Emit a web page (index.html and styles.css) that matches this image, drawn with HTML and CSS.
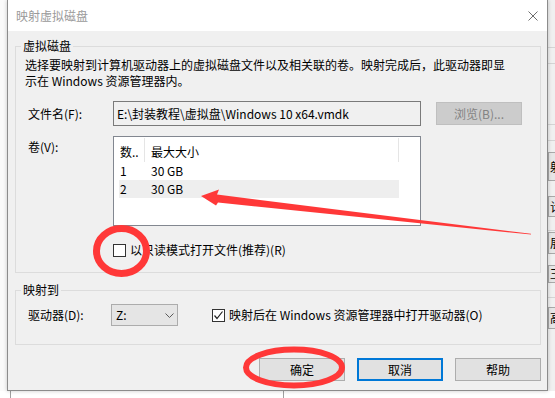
FILE: index.html
```html
<!DOCTYPE html>
<html lang="zh-CN">
<head>
<meta charset="utf-8">
<title>映射虚拟磁盘</title>
<link rel="stylesheet" href="styles.css">
</head>
<body>
<div class="desktop">
  <div class="top-row">
    <div class="gutter"></div>
    <div class="window">
      <div class="titlebar">
        <span class="title">映射虚拟磁盘</span>
        <svg class="close" width="10" height="10" viewBox="0 0 10 10"><path d="M0.5 0.5 L9.5 9.5 M9.5 0.5 L0.5 9.5" stroke="#6e6e6e" stroke-width="1" fill="none"/></svg>
      </div>
      <div class="body">
        <fieldset class="group g1">
          <legend>虚拟磁盘</legend>
          <div class="content">
            <p class="desc">选择要映射到计算机驱动器上的虚拟磁盘文件以及相关联的卷。映射完成后，此驱动器即显<br>示在 Windows 资源管理器内。</p>
            <div class="row file-row">
              <span class="label">文件名(F):</span>
              <div class="field">E:\封装教程\虚拟盘\Windows 10 x64.vmdk</div>
              <button class="btn disabled">浏览(B)...</button>
            </div>
            <div class="row vol-row">
              <span class="label vol-label">卷(V):</span>
              <div class="listbox">
                <div class="lv-head">
                  <div class="lv-c1">数..</div>
                  <div class="lv-c2">最大大小</div>
                </div>
                <div class="lv-row"><span class="c1">1</span><span class="c2">30 GB</span></div>
                <div class="lv-row selected"><span class="c1">2</span><span class="c2">30 GB</span></div>
              </div>
            </div>
            <div class="check-row ro">
              <span class="checkbox"></span>
              <span>以只读模式打开文件(推荐)(R)</span>
            </div>
          </div>
        </fieldset>
        <fieldset class="group g2">
          <legend>映射到</legend>
          <div class="content">
            <div class="row drive-row">
              <span class="label drive-label">驱动器(D):</span>
              <div class="combo"><span>Z:</span><svg width="9" height="5" viewBox="0 0 9 5"><polyline points="0.5,0.5 4.5,4.5 8.5,0.5" fill="none" stroke="#5a5a5a" stroke-width="1"/></svg></div>
              <span class="checkbox checked"><svg width="11" height="11" viewBox="0 0 11 11"><polyline points="1.5,5.5 4,8.5 9.5,1.5" fill="none" stroke="#222" stroke-width="1.2"/></svg></span>
              <span class="open-label">映射后在 Windows 资源管理器中打开驱动器(O)</span>
            </div>
          </div>
        </fieldset>
        <div class="buttons">
          <button class="btn">确定</button>
          <button class="btn focus">取消</button>
          <button class="btn">帮助</button>
        </div>
      </div>
    </div>
    <div class="rs">
      <div class="ln l1"></div>
      <div class="ln l2"></div>
      <div class="ln l3"></div>
      <div class="ln l4"></div>
      <div class="bx b1">射</div>
      <div class="bx b2">计</div>
      <div class="ln l5"></div>
      <div class="bx b3">展</div>
      <div class="bx b4">玉</div>
      <div class="ln l6"></div>
      <div class="bx b5">高</div>
    </div>
  </div>
  <div class="bottom">
    <div class="vl vl1"></div>
    <div class="vl vl2"></div>
  </div>
</div>
<svg class="annot" width="555" height="398" viewBox="0 0 555 398">
  <ellipse cx="121.5" cy="251" rx="25" ry="22.5" fill="none" stroke="#ff3838" stroke-width="7"/>
  <polygon points="201,196 219,189.5 217,194.5 531,233.8 531,234.6 218,202.5 216,205.5" fill="#ff3838"/>
  <ellipse cx="294" cy="367.5" rx="48" ry="18" fill="none" stroke="#ff3838" stroke-width="6"/>
</svg>
</body>
</html>
```
FILE: styles.css
```css
* { box-sizing: border-box; }
html, body { margin: 0; padding: 0; }
body {
  width: 555px;
  height: 398px;
  overflow: hidden;
  position: relative;
  background: #ffffff;
  font-family: "Noto Sans CJK SC", "Noto Sans", sans-serif;
  font-size: 12px;
  line-height: 16px;
  color: #000;
}
.desktop { display: flex; flex-direction: column; width: 555px; height: 398px; }
.top-row { display: flex; height: 391px; }
.gutter { width: 7px; background: #fafafa; }
.window {
  width: 541px;
  height: 391px;
  border: 1px solid #8c8c8c;
  border-top: 0;
  display: flex;
  flex-direction: column;
  background: #f0f0f0;
  box-shadow: 0 0 4px rgba(0,0,0,0.22);
  position: relative;
  z-index: 1;
}
.titlebar {
  height: 31px;
  flex: none;
  background: #fff;
  display: flex;
  align-items: center;
  justify-content: space-between;
  padding: 0 9px 0 8px;
  color: #9a9a9a;
}
.body {
  flex: 1;
  padding: 7px 6px 0 7px;
  display: flex;
  flex-direction: column;
}
fieldset.group {
  margin: 0;
  padding: 3px 0 14px 0;
  border: 1px solid #dcdcdc;
  min-width: 0;
}
fieldset.g2 { margin-top: 9px; padding: 6px 0 18px 0; }
legend { padding: 0 2px; margin-left: 5px; line-height: 16px; }
.content { padding-left: 9px; }
.desc { margin: 0; }
.row { display: flex; align-items: center; }
.label { width: 85px; margin-left: 3px; flex: none; }
.file-row { margin-top: 12px; }
.field {
  width: 308px;
  height: 25px;
  border: 1px solid #7a7a7a;
  background: #f0f0f0;
  padding-left: 3px;
  line-height: 23px;
  white-space: nowrap;
}
.btn {
  width: 86px;
  height: 23px;
  border: 1px solid #adadad;
  background: #e1e1e1;
  font: inherit;
  color: #000;
  padding: 0;
  line-height: 20px;
}
.btn.disabled { margin-left: 15px; background: #cccccc; border-color: #bfbfbf; color: #838383; }
.btn.focus { border: 2px solid #0078d7; }
.vol-row { margin-top: 10px; align-items: flex-start; }
.vol-label { margin-top: 3px; }
.listbox {
  width: 308px;
  height: 90px;
  border: 1px solid #828790;
  background: #fff;
}
.lv-head { display: flex; height: 24px; margin-top: 1px; }
.lv-c1 { width: 31px; padding: 6px 0 0 6px; border-right: 1px solid #e5e5e5; overflow: hidden; white-space: nowrap; }
.lv-c2 { width: 254px; padding: 6px 0 0 6px; border-right: 1px solid #e5e5e5; }
.lv-row { display: flex; margin-left: 5px; width: 280px; height: 18px; line-height: 18px; }
.lv-row.selected { background: #eeeeee; }
.lv-row .c1 { width: 32px; padding-left: 1px; }
.check-row { display: flex; align-items: center; }
.check-row.ro { margin-top: 16px; padding-left: 88px; }
.checkbox {
  width: 13px;
  height: 13px;
  border: 1px solid #333;
  background: #fff;
  margin-right: 4px;
  flex: none;
  display: flex;
  align-items: center;
  justify-content: center;
}
.drive-label { width: 83px; }
.combo {
  width: 67px;
  height: 22px;
  border: 1px solid #acacac;
  background: #e5e5e5;
  display: flex;
  align-items: center;
  justify-content: space-between;
  padding: 0 3px 0 4px;
}
.checkbox.checked { margin-left: 34px; }
.buttons { display: flex; justify-content: flex-end; gap: 12px; margin-top: 13px; }

.rs { width: 7px; background: #f0f0f0; display: flex; flex-direction: column; overflow: hidden; }
.ln { height: 1px; background: #d4d4d4; flex: none; }
.l1 { margin-top: 47px; }
.l2 { margin-top: 15px; }
.l3 { margin-top: 60px; }
.l4 { margin-top: 15px; }
.l5 { margin-top: 13px; }
.l6 { margin-top: 14px; }
.bx {
  flex: none;
  background: #e6e6e6;
  border: 1px solid #a8a8a8;
  border-right: 0;
  padding-left: 1px;
  white-space: nowrap;
  display: flex;
  align-items: center;
}
.b1 { margin-top: 11px; height: 29px; }
.b2 { margin-top: 15px; height: 21px; }
.b3 { margin-top: 1px; height: 22px; }
.b4 { margin-top: 11px; height: 18px; }
.b5 { margin-top: 9px; height: 22px; }

.bottom { display: flex; height: 7px; background: #fff; }
.vl { width: 1px; background: #a0a0a0; }
.vl1 { margin-left: 10px; }
.vl2 { margin-left: 272px; }

.annot { position: absolute; left: 0; top: 0; pointer-events: none; z-index: 5; }
```
